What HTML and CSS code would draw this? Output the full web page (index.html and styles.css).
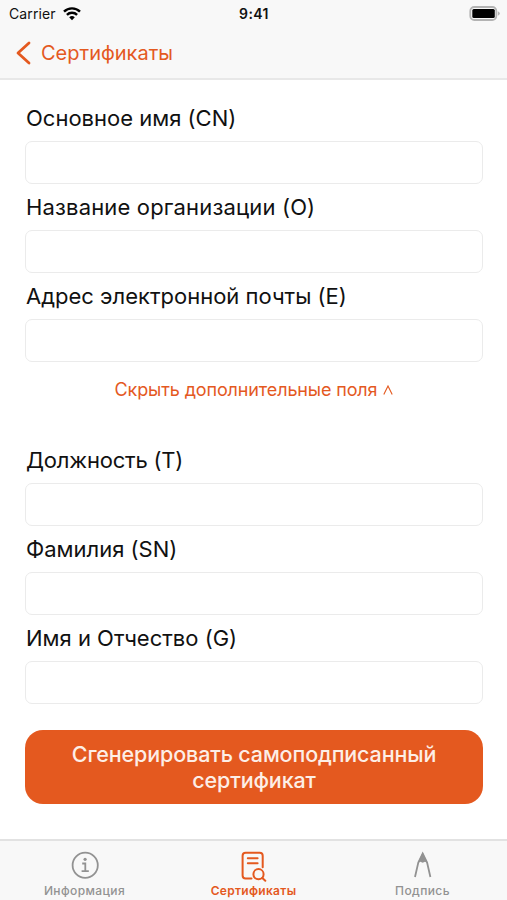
FILE: index.html
```html
<!DOCTYPE html>
<html lang="ru">
<head>
  <meta charset="UTF-8">
  <meta name="viewport" content="width=device-width, initial-scale=1">
  <title>Сертификаты</title>
  <link rel="stylesheet" href="styles.css">
</head>
<body>

<header>
  <div class="status-bar">
    <div class="carrier">
      <span>Carrier</span>
      <svg width="18" height="14" viewBox="0 0 18 14" fill="none" stroke="#000" stroke-width="2.4">
        <path d="M1 4.7a11.3 11.3 0 0 1 16 0"/>
        <path d="M3.9 7.8a7.2 7.2 0 0 1 10.2 0"/>
        <path d="M9 13.2 6.2 10.3a4 4 0 0 1 5.6 0z" fill="#000" stroke="none"/>
      </svg>
    </div>
    <span class="time">9:41</span>
    <svg class="battery" width="32" height="16" viewBox="0 0 32 16">
      <rect x="1.3" y="1" width="26" height="13" rx="4" fill="#f8f8f8" stroke="#b3b3b3" stroke-width="1.8"/>
      <rect x="3.3" y="3" width="22.5" height="9" rx="1.5" fill="#000"/>
      <path d="M28.8 5.2q2 .8 2 2.3t-2 2.3z" fill="#b3b3b3"/>
    </svg>
  </div>
  <a class="back" href="#">
    <svg width="16" height="24" viewBox="0 0 16 24" fill="none" stroke="currentColor" stroke-width="2.8" stroke-linecap="round" stroke-linejoin="round">
      <path d="M14 2 3 12l11 10"/>
    </svg>
    <span>Сертификаты</span>
  </a>
</header>

<main>
  <form id="certForm">
    <div class="field">
      <label for="cn">Основное имя (CN)</label>
      <input type="text" id="cn">
    </div>
    <div class="field">
      <label class="wide" for="org">Название организации (O)</label>
      <input type="text" id="org">
    </div>
    <div class="field">
      <label for="email">Адрес электронной почты (E)</label>
      <input type="text" id="email">
    </div>

    <button type="button" class="toggle">
      <span>Скрыть дополнительные поля</span>
      <svg width="10" height="10" viewBox="0 0 10 10" fill="none" stroke="currentColor" stroke-width="1.1">
        <path d="M.8 9.5 5 1l4.2 8.5"/>
      </svg>
    </button>

    <div class="field">
      <label class="narrow" for="title">Должность (T)</label>
      <input type="text" id="title">
    </div>
    <div class="field">
      <label for="sn">Фамилия (SN)</label>
      <input type="text" id="sn">
    </div>
    <div class="field">
      <label for="given">Имя и Отчество (G)</label>
      <input type="text" id="given">
    </div>

    <button type="submit" class="submit">Сгенерировать самоподписанный сертификат</button>
  </form>
</main>

<nav>
  <a class="tab" href="#">
    <svg width="30" height="32" viewBox="0 0 30 32" fill="none" stroke="currentColor" stroke-width="1.8">
      <circle cx="15.2" cy="15.3" r="12.6"/>
      <circle cx="15.1" cy="9.3" r="1.6" fill="currentColor" stroke="none"/>
      <path d="M12.2 13.5h3.1v7.6M11.6 21.2h7.2"/>
    </svg>
    <span>Информация</span>
  </a>
  <a class="tab active" href="#">
    <svg width="30" height="32" viewBox="0 0 30 32" fill="none" stroke="currentColor" stroke-width="2" stroke-linecap="round">
      <path d="M12.5 28.5H6.6a3 3 0 0 1-3-3V5.8a3 3 0 0 1 3-3h14.1a3 3 0 0 1 3 3v11.4"/>
      <path d="M8.8 8.3h9.8M8.8 13.3h9.8"/>
      <circle cx="19.5" cy="24.2" r="5.1"/>
      <path d="m23.3 28 3 2.8"/>
    </svg>
    <span>Сертификаты</span>
  </a>
  <a class="tab" href="#">
    <svg width="30" height="32" viewBox="0 0 30 32" fill="none" stroke="currentColor" stroke-width="1.8">
      <path d="M7 27 10.3 12.5 14.7 3.5l4.4 9L22.4 27"/>
      <path d="M10 12.8 14.7 2.3l4.7 10.5-2.4-1-2.3 1-2.3-1z" fill="currentColor" stroke="none"/>
    </svg>
    <span>Подпись</span>
  </a>
</nav>

</body>
</html>
```

FILE: styles.css
```css
* {
  box-sizing: border-box;
}

body {
  margin: 0;
  height: 900px;
  display: flex;
  flex-direction: column;
  font-family: Inter, 'Liberation Sans', sans-serif;
  background: #fff;
  color: #111;
}

a {
  color: inherit;
  text-decoration: none;
}

svg {
  display: block;
  flex-shrink: 0;
}

header {
  height: 80px;
  background: #f8f8f8;
  border-bottom: 2px solid #e8e8e8;
}

.status-bar {
  display: grid;
  grid-template-columns: 1fr auto 1fr;
  align-items: center;
  height: 27px;
  padding: 0 6px 0 9px;
  font-size: 14px;
}

.carrier {
  display: flex;
  align-items: center;
  gap: 7px;
  letter-spacing: 0.1px;
}

.time {
  position: relative;
  left: -1px;
  font-weight: 600;
  letter-spacing: 0.4px;
}

.battery {
  justify-self: end;
}

.back {
  display: flex;
  align-items: center;
  gap: 10px;
  height: 51px;
  padding-left: 15px;
  color: #e4591f;
  font-size: 20px;
}

main {
  flex: 1;
  padding: 20px 24px 0 25px;
}

form {
  display: flex;
  flex-direction: column;
}

.field {
  height: 89px;
}

label {
  display: block;
  height: 41px;
  padding-left: 1px;
  line-height: 36px;
  font-size: 22px;
  white-space: nowrap;
}

.wide {
  letter-spacing: 0.16px;
}

.narrow {
  letter-spacing: -0.2px;
}

input {
  display: block;
  width: 100%;
  height: 43px;
  padding: 0 10px;
  border: 1px solid #ebebeb;
  border-radius: 7px;
  background: #fff;
  font: inherit;
}

button {
  font: inherit;
  border: none;
  cursor: pointer;
}

.toggle {
  display: flex;
  align-items: center;
  justify-content: center;
  gap: 6px;
  height: 44px;
  margin-bottom: 31px;
  padding: 0;
  background: none;
  color: #e4591f;
  font-size: 18px;
  letter-spacing: -0.13px;
}

.toggle svg {
  margin-top: 2px;
}

.submit {
  height: 74px;
  margin-top: 21px;
  padding: 0 40px;
  border-radius: 18px;
  background: #e4591f;
  color: #fdeee6;
  font-size: 21.5px;
  font-weight: 500;
  letter-spacing: -0.14px;
  line-height: 26px;
}

nav {
  display: grid;
  grid-template-columns: repeat(3, 1fr);
  height: 61px;
  background: #f8f8f8;
  border-top: 2px solid #e2e2e2;
}

.tab {
  display: flex;
  flex-direction: column;
  align-items: center;
  padding-top: 9px;
  color: #929292;
  font-size: 12px;
  font-weight: 500;
  letter-spacing: 0.4px;
  line-height: 18px;
}

.active {
  color: #e4591f;
  font-weight: 600;
  letter-spacing: 0.3px;
}
```
